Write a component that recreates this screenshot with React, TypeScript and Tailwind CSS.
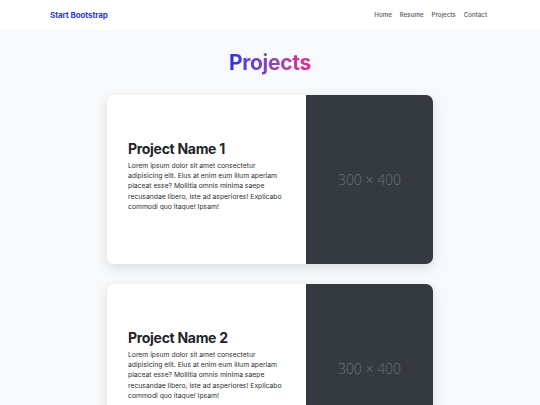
const projects = [
  { id: 1, name: 'Project Name 1' },
  { id: 2, name: 'Project Name 2' },
]

// wrapped the same way as the screenshot
const blurbLines = [
  'Lorem ipsum dolor sit amet consectetur',
  'adipisicing elit. Eius at enim eum illum aperiam',
  'placeat esse? Mollitia omnis minima saepe',
  'recusandae libero, iste ad asperiores! Explicabo',
  'commodi quo itaque! Ipsam!',
]

const Navbar = () => (
  <nav className="flex h-[30px] items-center justify-between bg-white pr-[53px] pl-[50px]">
    <a className="text-[8px] font-bold tracking-[-0.1px] text-[#2f3bd6]">Start Bootstrap</a>
    <ul className="flex items-center gap-[8px] text-[6.2px] font-medium text-[#555]">
      <li>Home</li>
      <li>Resume</li>
      <li>Projects</li>
      <li>Contact</li>
    </ul>
  </nav>
)

const ProjectCard = ({ name }: { name: string }) => (
  <div className="flex h-[169px] w-[326px] overflow-hidden rounded-[7px] bg-white shadow-[0_4px_12px_rgba(0,0,0,0.12)]">
    <div className="flex flex-1 flex-col justify-center px-[21px] pb-[7px]">
      <h2 className="text-[14px] leading-[18px] font-bold tracking-[-0.3px] text-[#212529]">{name}</h2>
      <p className="mt-[3px] text-[6.8px] leading-[10.3px] text-[#2b2f33]">
        {blurbLines.map(line => (
          <span key={line} className="block whitespace-nowrap">
            {line}
          </span>
        ))}
      </p>
    </div>
    <div className="flex w-[127px] shrink-0 items-center justify-center bg-[#343a40]">
      <span className="font-['Open_Sans',sans-serif] text-[14px] font-light text-[#6c757d]">300 × 400</span>
    </div>
  </div>
)

export default function App() {
  return (
    <div className="min-h-[405px] bg-[#f8f9fa] font-['Inter',sans-serif]">
      <Navbar />
      <section className="flex flex-col items-center pt-[19px] pb-10">
        <h1 className="bg-gradient-to-r from-[#2e2fe0] to-[#e0258a] bg-clip-text text-[21px] leading-[28px] font-bold tracking-[-0.3px] text-transparent">
          Projects
        </h1>
        <div className="mt-[18px] flex flex-col gap-[20px]">
          {projects.map(project => (
            <ProjectCard key={project.id} name={project.name} />
          ))}
        </div>
      </section>
    </div>
  )
}
